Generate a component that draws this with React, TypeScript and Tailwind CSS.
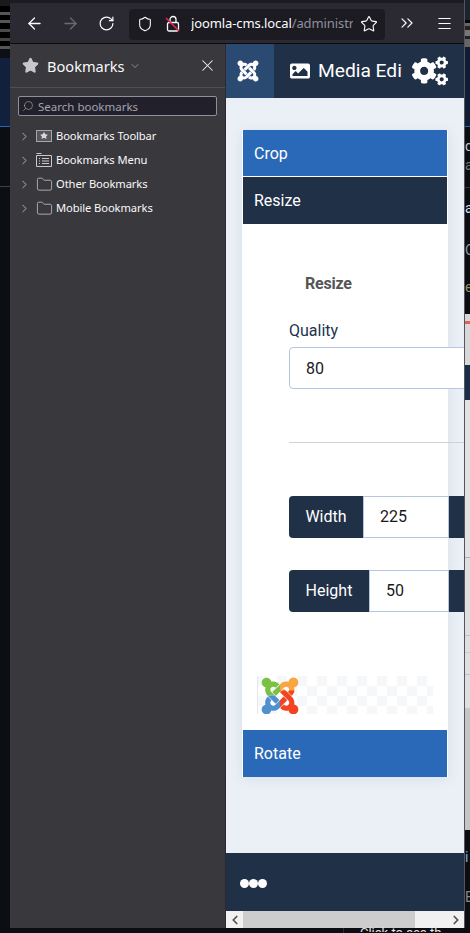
import React from 'react';
import {
  ArrowLeft,
  ArrowRight,
  ChevronDown,
  ChevronLeft,
  ChevronRight,
  ChevronsRight,
  Folder,
  Menu,
  RotateCw,
  Search,
  Shield,
  Star,
  X,
} from 'lucide-react';
import { FaCogs, FaImage, FaJoomla } from 'react-icons/fa';

const LockOff = () => (
  <svg width="16" height="18" viewBox="0 0 16 18" fill="none" className="shrink-0">
    <rect x="2.5" y="7.5" width="11" height="8.5" rx="1.5" stroke="#fbfbfe" strokeWidth="1.3" />
    <path d="M5 7.5V4.5a3 3 0 0 1 6 0v3" stroke="#fbfbfe" strokeWidth="1.3" />
    <path d="M1 3l13 13" stroke="#e22850" strokeWidth="1.6" />
  </svg>
);

const ToolbarFolderIcon = () => (
  <svg width="16" height="12" viewBox="0 0 16 12" fill="none" className="shrink-0">
    <rect x="0.5" y="0.5" width="15" height="11" fill="#55555a" stroke="#a5a5aa" />
    <path d="M8 2l1.4 2.3 2.5.4-1.8 1.7.4 2.5L8 7.8 5.5 8.9l.4-2.5-1.8-1.7 2.5-.4z" fill="#d8d8da" />
  </svg>
);

const MenuFolderIcon = () => (
  <svg width="16" height="14" viewBox="0 0 16 14" fill="none" className="shrink-0">
    <path d="M.5.5h5M.5 2.5h15v11H.5z" stroke="#c8c8cc" />
    <path d="M3 5.5h1M6 5.5h7M3 8h1M6 8h7M3 10.5h1M6 10.5h7" stroke="#c8c8cc" />
  </svg>
);

const PlainFolder = () => <Folder size={17} strokeWidth={1.1} color="#c8c8cc" className="shrink-0 -mx-px" />;

const bookmarkRows = [
  { label: 'Bookmarks Toolbar', icon: <ToolbarFolderIcon /> },
  { label: 'Bookmarks Menu', icon: <MenuFolderIcon /> },
  { label: 'Other Bookmarks', icon: <PlainFolder /> },
  { label: 'Mobile Bookmarks', icon: <PlainFolder /> },
];

// the four coloured arms of the logo are one glyph cut into quadrants
const JoomlaColor = () => (
  <div className="relative w-[37px] h-[41px]">
    <FaJoomla size={42} color="#7ac143" className="absolute inset-0 [clip-path:inset(0_50%_50%_0)]" />
    <FaJoomla size={42} color="#f9a541" className="absolute inset-0 [clip-path:inset(0_0_50%_50%)]" />
    <FaJoomla size={42} color="#5091cd" className="absolute inset-0 [clip-path:inset(50%_50%_0_0)]" />
    <FaJoomla size={42} color="#f44321" className="absolute inset-0 [clip-path:inset(38%_0_0_50%)]" />
  </div>
);

const Stripes = ({ rows }: { rows: string[] }) => (
  <>
    {rows.map((c, i) => (
      <div key={i} className={c} />
    ))}
  </>
);

const Fragment = ({ text, cls }: { text: string; cls: string }) => (
  <div className={`overflow-hidden font-['Roboto',sans-serif] text-[14px] leading-none flex items-center ${cls}`}>
    {text}
  </div>
);

const App = () => {
  return (
    <div className="flex flex-col w-[470px] h-[933px] overflow-hidden bg-[#0b0d12] font-['Roboto',sans-serif]">
      <div className="flex h-[928px] shrink-0">
        {/* page behind the browser, left */}
        <div className="w-[10px] shrink-0 flex flex-col bg-[#0b0f14]">
          <Stripes
            rows={[
              'h-[6px] bg-[#1a1a1e]',
              'h-[6px] bg-[#000]',
              'h-[3px] bg-[#555]',
              'h-[5px] bg-[#000]',
              'h-[3px] bg-[#555]',
              'h-[6px] bg-[#000]',
              'h-[3px] bg-[#4a4a4a]',
              'h-[6px] bg-[#000]',
              'h-[3px] bg-[#444]',
              'h-[5px] bg-[#000]',
              'h-[3px] bg-[#555]',
              'h-[9px] bg-[#0d0f14]',
              'h-[68px] bg-[#11213d]',
              'h-px bg-[#2a66b4]',
              'h-[59px] bg-[#0b0f14]',
              'h-px bg-[#3d4147]',
            ]}
          />
        </div>

        {/* browser window */}
        <div className="w-[455px] shrink-0 flex flex-col border-r border-[#55555a]">
          <div className="h-[3px] bg-[#1c1b22]" />
          <div className="h-[40px] bg-[#2b2a33] flex items-center text-[#fbfbfe]">
            <ArrowLeft size={19} strokeWidth={1.6} className="ml-[15px] shrink-0" />
            <ArrowRight size={19} strokeWidth={1.6} color="#6b6a71" className="ml-[17px] shrink-0" />
            <RotateCw size={17} strokeWidth={1.7} className="ml-[18px] shrink-0" />
            <div className="ml-[14px] w-[256px] h-[31px] mt-[2px] rounded bg-[#1c1b22] flex items-center shrink-0">
              <Shield size={16} strokeWidth={1.6} className="ml-[8px] shrink-0" />
              <span className="ml-[12px] shrink-0">
                <LockOff />
              </span>
              <div className="ml-[10px] w-[162px] overflow-hidden whitespace-nowrap font-['Noto_Sans',sans-serif] text-[13px] tracking-[-0.1px]">
                joomla-cms.local<span className="text-[#8f8f9d]">/administrator</span>
              </div>
              <Star size={18} strokeWidth={1.5} className="ml-[7px] shrink-0" />
            </div>
            <ChevronsRight size={20} strokeWidth={1.4} className="ml-[12px] shrink-0" />
            <Menu size={17} strokeWidth={1.6} className="ml-[19px] shrink-0" />
          </div>
          <div className="h-px bg-[#0c0c0d]" />

          <div className="flex flex-1 min-h-0">
            {/* bookmarks sidebar */}
            <aside className="w-[216px] shrink-0 bg-[#38383d] border-r border-[#2b2a33] flex flex-col text-[#f9f9fa] font-['Noto_Sans',sans-serif]">
              <div className="h-[44px] shrink-0 flex items-center border-b border-[#4e4e53] pl-[12px] pr-[8px]">
                <Star size={17} fill="#c8c8cc" color="#c8c8cc" className="shrink-0" />
                <span className="ml-[8px] pt-px text-[14.6px] leading-none">Bookmarks</span>
                <ChevronDown size={12} strokeWidth={1.5} color="#a5a5aa" className="ml-[4px]" />
                <X size={19} strokeWidth={1.3} className="ml-auto" />
              </div>
              <div className="mx-[8px] mt-[8px] h-[20px] shrink-0 bg-[#22212b] border border-[#8f8f9d] rounded-[2px] flex items-center pl-[3px]">
                <Search size={12} strokeWidth={1.3} color="#a5a5aa" className="-scale-x-100" />
                <span className="ml-[4px] pt-px text-[11.5px] text-[#a3a3b0] leading-none">Search bookmarks</span>
              </div>
              <ul className="mt-[8px] flex flex-col">
                {bookmarkRows.map((row) => (
                  <li key={row.label} className="h-[24px] flex items-center pl-[8px]">
                    <ChevronRight size={13} strokeWidth={1.5} color="#c8c8cc" className="shrink-0" />
                    <span className="ml-[5px] w-[16px] flex justify-center">{row.icon}</span>
                    <span className="ml-[4px] text-[11.2px] tracking-[-0.1px] leading-none whitespace-nowrap">{row.label}</span>
                  </li>
                ))}
              </ul>
            </aside>

            {/* joomla page */}
            <div className="w-[238px] shrink-0 flex flex-col overflow-hidden bg-[#ebf0f6]">
              <header className="h-[54px] shrink-0 flex items-center bg-[#1f3047] text-white">
                <div className="w-[48px] h-full shrink-0 flex items-center pl-[10px] bg-[#2a4a72]">
                  <FaJoomla size={24} />
                </div>
                <FaImage size={20} className="ml-[16px] shrink-0" />
                <div className="ml-[8px] w-[84px] overflow-hidden whitespace-nowrap text-[19.2px] leading-none">
                  Media Editor
                </div>
                <FaCogs size={36} className="ml-[10px] shrink-0" />
              </header>

              <main className="flex-1 min-h-0 pt-[32px] pl-[16px]">
                <div className="w-[206px] shadow-[0_2px_12px_rgba(60,90,140,0.1)] bg-white">
                  <div className="mx-px h-[46px] flex items-center pl-[11px] pt-[2px] bg-[#2a69b8] text-white text-[16px]">Crop</div>
                  <div className="mx-px mt-px h-[47px] flex items-center pl-[11px] bg-[#1f3047] text-white text-[16px]">Resize</div>

                  <div className="h-[505px] pl-[47px]">
                    <div className="pt-[50px] pl-[16px] text-[16px] leading-[19px] font-bold text-[#555] tracking-[-0.2px]">Resize</div>
                    <label className="block mt-[28px] text-[16px] leading-[19px] text-[#22334d]">Quality</label>
                    <div className="mt-[7px] w-[190px] h-[42px] flex items-center pl-[16px] pt-px border border-[#b5c6df] rounded-[4px] text-[16px] text-[#1a1a1a] bg-white">
                      80
                    </div>
                    <div className="mt-[53px] w-[190px] h-px bg-[#cfd3d8]" />

                    <div className="mt-[53px] w-[190px] h-[42px] flex text-[16px]">
                      <div className="w-[74px] flex items-center justify-center bg-[#1f3047] text-white rounded-l-[4px]">Width</div>
                      <div className="w-[86px] flex items-center pl-[16px] border border-[#b5c6df] bg-white text-[#1a1a1a]">225</div>
                      <div className="flex-1 bg-[#1f3047]" />
                    </div>
                    <div className="mt-[32px] w-[190px] h-[42px] flex text-[16px]">
                      <div className="w-[80px] flex items-center justify-center bg-[#1f3047] text-white rounded-l-[4px]">Height</div>
                      <div className="w-[80px] flex items-center pl-[16px] border border-[#b5c6df] bg-white text-[#1a1a1a]">50</div>
                      <div className="flex-1 bg-[#1f3047]" />
                    </div>

                    <div className="relative mt-[64px] -ml-[32px] w-[176px] h-[38px] flex items-center overflow-hidden">
                      <svg width="176" height="38" className="absolute inset-0">
                        <defs>
                          <pattern id="checker" width="20" height="20" patternUnits="userSpaceOnUse">
                            <rect x="0" y="0" width="10" height="10" fill="#f5f7f9" />
                            <rect x="10" y="10" width="10" height="10" fill="#f5f7f9" />
                          </pattern>
                        </defs>
                        <rect width="176" height="38" fill="url(#checker)" />
                        <rect width="1" height="38" fill="#e4e8ee" />
                      </svg>
                      <div className="relative ml-[2px]">
                        <JoomlaColor />
                      </div>
                    </div>
                  </div>

                  <div className="mx-px mt-px h-[47px] flex items-center pl-[11px] bg-[#2a69b8] text-white text-[16px]">Rotate</div>
                </div>
              </main>

              <footer className="h-[58px] shrink-0 bg-[#1f3047] flex items-center pl-[14px] pt-[2px]">
                <span className="w-[9px] h-[9px] rounded-full bg-white" />
                <span className="w-[9px] h-[9px] rounded-full bg-white" />
                <span className="w-[9px] h-[9px] rounded-full bg-white" />
              </footer>
              <div className="h-[17px] shrink-0 bg-[#f1f1f1] flex items-center">
                <ChevronLeft size={14} strokeWidth={3} color="#505050" className="ml-[2px] shrink-0" />
                <div className="ml-px w-[172px] h-full bg-[#cdcdcd] shrink-0" />
                <ChevronRight size={14} strokeWidth={3} color="#505050" className="ml-auto mr-[1px] shrink-0" />
              </div>
            </div>
          </div>
        </div>

        {/* page behind the browser, right */}
        <div className="w-[5px] shrink-0 flex flex-col overflow-hidden text-[#c8c8c8]">
          <Stripes
            rows={[
              'h-[20px] bg-[#1b2331]',
              'h-[3px] bg-[#000]',
              'h-[3px] bg-[#666]',
              'h-[4px] bg-[#222]',
              'h-[6px] bg-[#777]',
              'h-[3px] bg-[#222]',
              'h-[8px] bg-[#666]',
              'h-[79px] bg-[#101c33]',
              'h-px bg-[#2a66b4]',
            ]}
          />
          <Fragment text="d" cls="h-[26px] items-end bg-[#0b0d12]" />
          <Fragment text="a" cls="h-[24px] bg-[#0b0d12] text-[#777]" />
          <div className="h-[10px] bg-[#0b0d12]" />
          <div className="h-px bg-[#33363b]" />
          <Fragment text="a" cls="h-[40px] bg-[#0b0d12] text-[#dde]" />
          <Fragment text="O" cls="h-[44px] bg-[#0b0d12] text-[#999]" />
          <Fragment text="e" cls="h-[30px] bg-[#0b0d12] text-[#a08a60]" />
          <div className="h-[12px] bg-[#0b0d12]" />
          <div className="h-[7px] bg-[#d8d8d8]" />
          <div className="h-[3px] bg-[#e06060]" />
          <div className="h-[41px] bg-[#d8d8d8]" />
          <div className="h-[35px] bg-[#1b2c48]" />
          <div className="h-[157px] bg-[#e2e2e2]" />
          <div className="h-px bg-[#9db4d4]" />
          <div className="h-[77px] bg-[#dfdfdf]" />
          <div className="h-px bg-[#b8c6d8]" />
          <div className="h-[16px] bg-[#dfdfdf]" />
          <div className="h-px bg-[#c8ccd0]" />
          <div className="h-[21px] bg-[#dfdfdf]" />
          <div className="h-px bg-[#b8c6d8]" />
          <div className="h-[33px] bg-[#dfdfdf]" />
          <div className="h-[122px] bg-[#c4c6c6]" />
          <Fragment text="" cls="h-[10px] bg-[#0b0d12]" />
          <Fragment text="i" cls="h-[34px] bg-[#0b0d12] text-[#7ab0d8]" />
          <Fragment text="E" cls="h-[46px] bg-[#0b0d12] text-[#888]" />
          <div className="flex-1 bg-[#0b0d12]" />
        </div>
      </div>

      {/* bottom edge of the page behind */}
      <div className="flex-1 flex min-h-0">
        <div className="w-[344px] shrink-0 border-r border-[#2a2c30]" />
        <div className="ml-[16px] h-[5px] overflow-hidden text-[13px] leading-[11px] text-[#e5e5e5] whitespace-nowrap -mt-[1px]">
          Click to see th
        </div>
      </div>
    </div>
  );
};

export default App;
